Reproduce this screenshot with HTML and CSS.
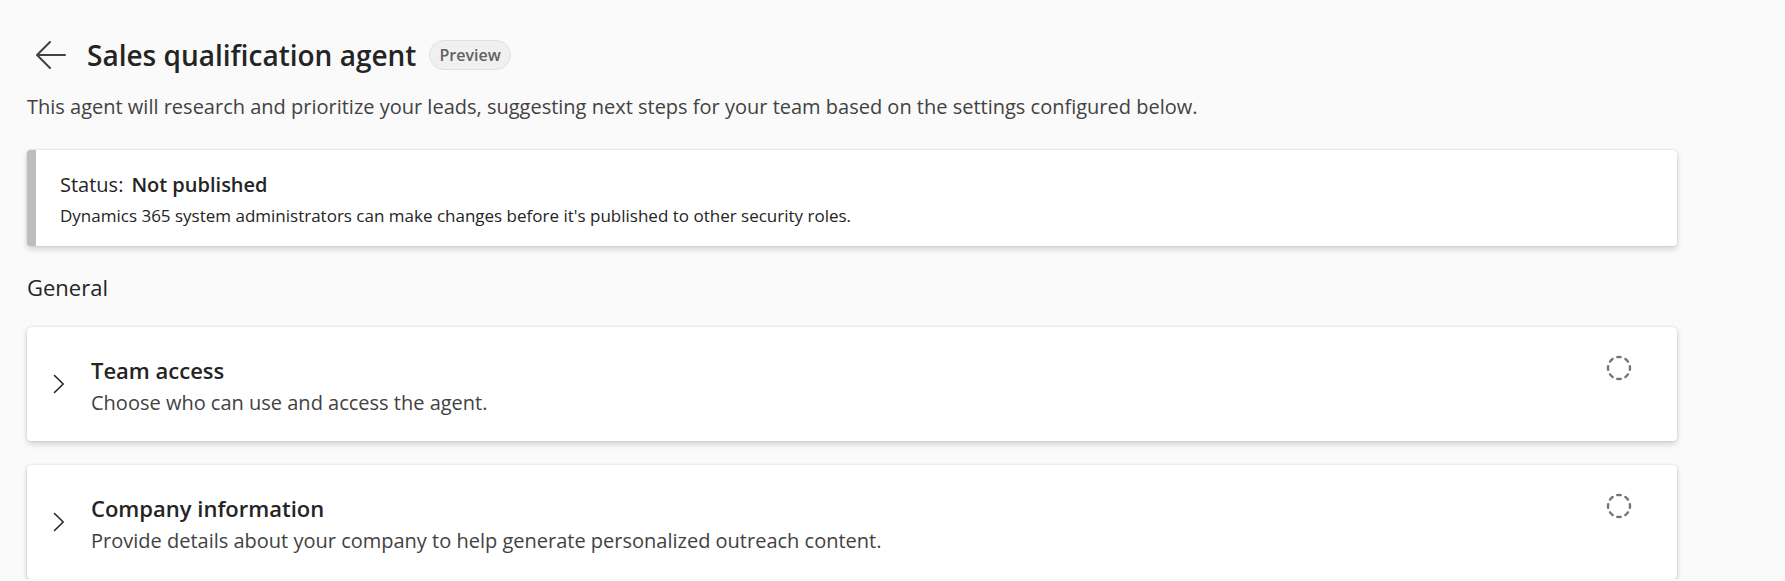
FILE: index.html
```html
<!DOCTYPE html>
<html lang="en">
<head>
<meta charset="utf-8">
<title>Sales qualification agent</title>
<link rel="stylesheet" href="styles.css">
</head>
<body>
<main class="page">
  <header class="page-header">
    <button class="back" type="button" aria-label="Back">
      <svg width="30" height="30" viewBox="0 0 30 30" fill="none" stroke="currentColor" stroke-width="2" stroke-linecap="round" stroke-linejoin="round" aria-hidden="true"><path d="M14 2 1 15l13 13M1 15h28"/></svg>
    </button>
    <h1 class="title">Sales qualification agent</h1>
    <span class="badge">Preview</span>
  </header>
  <p class="intro">This agent will research and prioritize your leads, suggesting next steps for your team based on the settings configured below.</p>

  <section class="card status">
    <p class="status-line"><span>Status:</span><strong>Not published</strong></p>
    <p class="status-note">Dynamics 365 system administrators can make changes before it's published to other security roles.</p>
  </section>

  <h2 class="section-title">General</h2>

  <div class="settings">
    <button class="card setting" type="button" aria-expanded="false">
      <svg class="chevron" width="12" height="20" viewBox="0 0 12 20" fill="none" stroke="currentColor" stroke-width="1.6" stroke-linecap="round" stroke-linejoin="round" aria-hidden="true"><path d="m1.500 1.500 8.700 8.500-8.700 8.500"/></svg>
      <span class="setting-text">
        <span class="setting-name">Team access</span>
        <span class="setting-desc">Choose who can use and access the agent.</span>
      </span>
      <svg class="progress" width="26" height="26" viewBox="0 0 26 26" fill="none" stroke="currentColor" stroke-width="2.4" stroke-linecap="round" aria-hidden="true"><circle cx="13" cy="13" r="11" pathLength="80" stroke-dasharray="4.200 5.800" stroke-dashoffset="2.100"/></svg>
    </button>
    <button class="card setting" type="button" aria-expanded="false">
      <svg class="chevron" width="12" height="20" viewBox="0 0 12 20" fill="none" stroke="currentColor" stroke-width="1.6" stroke-linecap="round" stroke-linejoin="round" aria-hidden="true"><path d="m1.500 1.500 8.700 8.500-8.700 8.500"/></svg>
      <span class="setting-text">
        <span class="setting-name">Company information</span>
        <span class="setting-desc">Provide details about your company to help generate personalized outreach content.</span>
      </span>
      <svg class="progress" width="26" height="26" viewBox="0 0 26 26" fill="none" stroke="currentColor" stroke-width="2.4" stroke-linecap="round" aria-hidden="true"><circle cx="13" cy="13" r="11" pathLength="80" stroke-dasharray="4.200 5.800" stroke-dashoffset="2.100"/></svg>
    </button>
  </div>
</main>
</body>
</html>
```
FILE: styles.css
```css
* {
  box-sizing: border-box;
}

body {
  margin: 0;
  background: #fafafa;
  color: #242424;
  font-family: "Segoe UI", "Open Sans", "Noto Sans", sans-serif;
}

h1,
h2,
p {
  margin: 0;
}

button {
  font: inherit;
  color: inherit;
  border: 0;
  cursor: pointer;
}

.page {
  padding: 35px 108px 0 27px;
}

.page-header {
  display: flex;
  align-items: center;
  gap: 13px;
  padding-left: 9px;
}

.back {
  display: flex;
  padding: 0;
  margin-right: 8px;
  background: none;
  color: #424242;
}

.title {
  font-size: 28px;
  line-height: 40px;
  font-weight: 600;
}

.badge {
  padding: 0 9px;
  border: 1px solid #e0e0e0;
  border-radius: 16px;
  background: #f0f0f0;
  color: #616161;
  font-size: 16px;
  line-height: 28px;
  font-weight: 600;
}

.intro {
  margin-top: 18px;
  color: #424242;
  font-size: 20px;
  line-height: 28px;
}

.card {
  border-radius: 4px;
  background: #fff;
  box-shadow: 0 0 2px rgba(0, 0, 0, 0.16), 0 3px 6px rgba(0, 0, 0, 0.16);
}

.status {
  margin-top: 29px;
  padding: 19px 24px 15px;
  border-left: 9px solid #bdbdbd;
}

.status-line {
  display: flex;
  gap: 8px;
  font-size: 20px;
  line-height: 32px;
}

.status-line strong {
  font-weight: 600;
}

.status-note {
  font-size: 17px;
  line-height: 30px;
}

.section-title {
  margin: 25px 0 24px;
  font-size: 22px;
  line-height: 32px;
  font-weight: 400;
}

.settings {
  display: flex;
  flex-direction: column;
  gap: 24px;
}

.setting {
  display: flex;
  align-items: center;
  gap: 26px;
  width: 100%;
  padding: 24px 45px 24px 26px;
  text-align: left;
}

.setting-text {
  display: flex;
  flex: 1;
  flex-direction: column;
}

.setting-name {
  font-size: 22px;
  line-height: 38px;
  font-weight: 600;
}

.setting-desc {
  color: #424242;
  font-size: 20px;
  line-height: 28px;
}

.chevron {
  flex: none;
}

.progress {
  flex: none;
  align-self: flex-start;
  margin-top: 4px;
  color: #757575;
}
```
